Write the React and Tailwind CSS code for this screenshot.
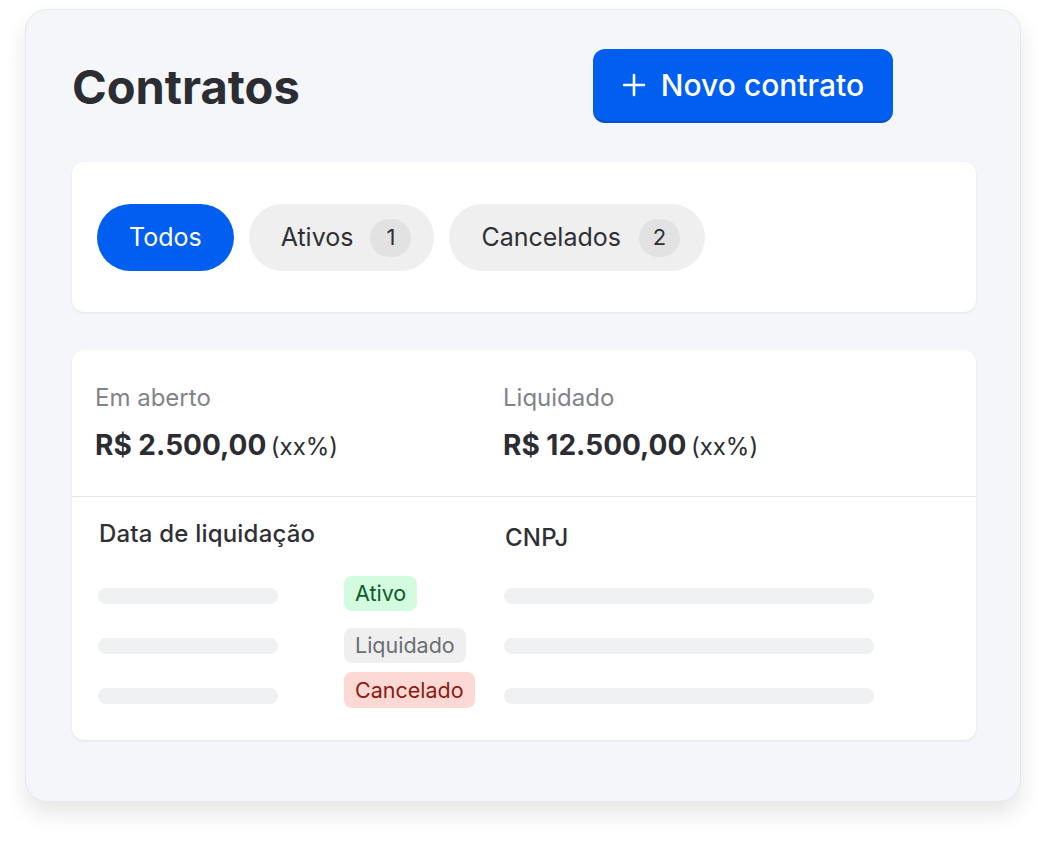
export default function App() {
  const bar = "h-4 rounded-full bg-[#eff0f1]";
  return (
    <div className="min-h-screen bg-white pt-[9px] pl-[25px]" style={{ fontFamily: "Inter, 'Noto Sans', sans-serif" }}>
      <div className="w-[996px] h-[793px] rounded-[22px] bg-[#f5f6fa] border border-[#e6e8ec] shadow-[0_12px_22px_rgba(0,0,0,0.10)] pl-[46px] pt-[39px]">
        <div className="flex items-center h-[74px] w-[904px]">
          <h1 className="text-[47px] font-bold text-[#2b2d33] leading-none">Contratos</h1>
          <button className="ml-auto mr-[83px] h-[74px] w-[300px] rounded-[12px] bg-[#005ef0] border-b-2 border-[#0a4fc4] flex items-center justify-center gap-[15px] text-white text-[30px] font-medium">
            <svg width="24" height="24" viewBox="0 0 24 24" fill="none" stroke="white" strokeWidth="2.6" strokeLinecap="round">
              <path d="M12 2v20M2 12h20" />
            </svg>
            <span>Novo contrato</span>
          </button>
        </div>

        <div className="mt-[39px] w-[904px] h-[150px] rounded-[12px] bg-white shadow-[0_1px_3px_rgba(0,0,0,0.08)] pl-[25px] pt-[42px] flex items-start gap-[15px]">
          <div className="h-[67px] px-[32px] rounded-full bg-[#005ef0] text-white text-[25px] flex items-center">Todos</div>
          <div className="h-[67px] pl-[32px] pr-[23px] rounded-full bg-[#efefef] text-[#2f3035] text-[25px] flex items-center gap-[17px]">
            <span>Ativos</span>
            <span className="w-[41px] h-[38px] rounded-full bg-[#e2e2e3] text-[22px] flex items-center justify-center">1</span>
          </div>
          <div className="h-[67px] pl-[32px] pr-[25px] rounded-full bg-[#efefef] text-[#2f3035] text-[25px] flex items-center gap-[18px]">
            <span>Cancelados</span>
            <span className="w-[41px] h-[38px] rounded-full bg-[#e2e2e3] text-[22px] flex items-center justify-center">2</span>
          </div>
        </div>

        <div className="mt-[38px] w-[904px] h-[390px] rounded-[12px] bg-white shadow-[0_1px_3px_rgba(0,0,0,0.08)]">
          <div className="flex pl-[23px] pt-[32px] pb-[29px] border-b border-[#e6e7ea]">
            <div className="w-[408px]">
              <div className="text-[24px] leading-[32px] text-[#7f838a]">Em aberto</div>
              <div className="mt-[13px] leading-[36px] text-[#2b2d33]">
                <span className="text-[28px] font-bold">R$ 2.500,00</span>{" "}
                <span className="text-[24px]">(xx%)</span>
              </div>
            </div>
            <div>
              <div className="text-[24px] leading-[32px] text-[#7f838a]">Liquidado</div>
              <div className="mt-[13px] leading-[36px] text-[#2b2d33]">
                <span className="text-[28px] font-bold">R$ 12.500,00</span>{" "}
                <span className="text-[24px]">(xx%)</span>
              </div>
            </div>
          </div>

          <div className="flex">
            <div className="w-[432px] pl-[26px] pt-[23px]">
              <div className="text-[24px] leading-[28px] font-medium tracking-[0.2px] text-[#2f3035] pl-px">Data de liquidação</div>
              <div className="flex items-start">
                <div className="w-[180px] mt-[40px] flex flex-col gap-[34px]">
                  <div className={bar} />
                  <div className={bar} />
                  <div className={bar} />
                </div>
                <div className="ml-[66px] mt-[28px] flex flex-col items-start text-[21.5px]">
                  <span className="h-[35px] px-[11px] rounded-[8px] bg-[#d3fbe0] text-[#0d5a27] flex items-center">Ativo</span>
                  <span className="mt-[17px] h-[35px] px-[11px] rounded-[8px] bg-[#efefef] text-[#6b6e73] flex items-center">Liquidado</span>
                  <span className="mt-[9px] h-[36px] px-[11px] rounded-[8px] bg-[#fdd9d5] text-[#8b1a10] flex items-center">Cancelado</span>
                </div>
              </div>
            </div>
            <div className="pt-[27px]">
              <div className="text-[24px] leading-[28px] font-medium tracking-[0.2px] text-[#2f3035] pl-px">CNPJ</div>
              <div className="w-[370px] mt-[36px] flex flex-col gap-[34px]">
                <div className={bar} />
                <div className={bar} />
                <div className={bar} />
              </div>
            </div>
          </div>
        </div>
      </div>
    </div>
  );
}
